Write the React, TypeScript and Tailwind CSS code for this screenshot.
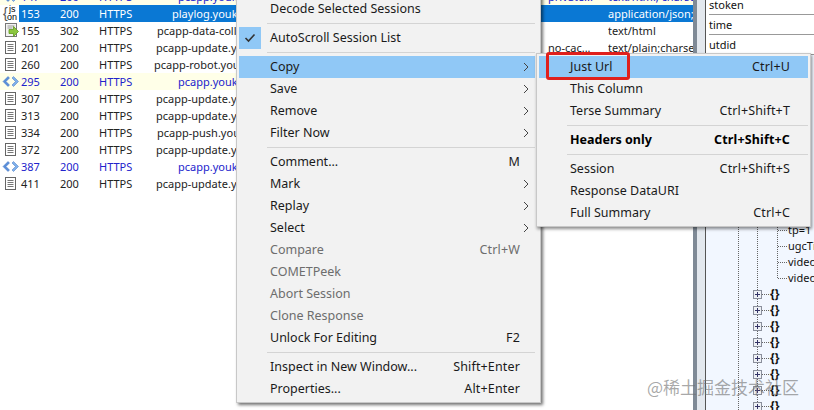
import React from "react";

const DocIcon = () => (
  <svg width="16" height="16" viewBox="0 0 16 16" className="shrink-0">
    <rect x="2.5" y="1.5" width="10" height="12" fill="#fff" stroke="#666" />
    <path d="M4.5 4.5h6M4.5 6.5h6M4.5 8.5h6M4.5 10.5h6" stroke="#777" strokeWidth="1" />
  </svg>
);
const CodeIcon = () => (
  <svg width="19" height="16" viewBox="0 0 19 16" className="shrink-0">
    <path d="M8 2.5L3 7.5l5 5 1.5-1.5L6 7.5 9.5 4z" fill="#5b8fd9" stroke="#3f74c4" strokeWidth=".5" />
    <path d="M13.5 2.5l5 5-5 5-1.5-1.5 3.5-3.5L12 4z" fill="#7fb0ea" stroke="#3f74c4" strokeWidth=".5" />
  </svg>
);
const RedirectIcon = () => (
  <svg width="20" height="16" viewBox="0 0 20 16" className="shrink-0">
    <rect x="6.5" y="0.5" width="11" height="13" fill="#f2f2f2" stroke="#777" />
    <path d="M8.5 3h7M8.5 5h5" stroke="#999" />
    <path d="M10 6.5h4.5v-3l5 5-5 5v-3H10z" fill="#8cc63f" stroke="#5f9a1a" strokeWidth=".8" />
  </svg>
);
const JsonIcon = () => (
  <div className="w-[19px] h-[17px] shrink-0 relative font-['Liberation_Sans',sans-serif] text-black">
    <span className="absolute left-[9px] top-[0px] text-[9px] leading-[8px]">js</span>
    <span className="absolute left-[7px] top-[8px] text-[9px] leading-[8px]">on</span>
    <span className="absolute left-[3px] top-[1px] text-[14px] leading-[14px] text-[#555]">{"{"}</span>
  </div>
);

type Row = {
  icon: React.ReactNode;
  id: string;
  status: string;
  host: string;
  pad: string;
  cache?: string;
  type?: string;
  blue?: boolean;
  yellow?: boolean;
  sel?: boolean;
};

const rows: Row[] = [
  { icon: <CodeIcon />, id: "147", status: "200", host: "pcapp.youku.com", pad: "pl-[40px]", cache: "private...", type: "text/html; charset", blue: true, yellow: true },
  { icon: <JsonIcon />, id: "153", status: "200", host: "playlog.youku.com", pad: "pl-[34px]", type: "application/json;charset", sel: true },
  { icon: <RedirectIcon />, id: "155", status: "302", host: "pcapp-data-collect.youku.com", pad: "pl-[19px]", type: "text/html" },
  { icon: <DocIcon />, id: "201", status: "200", host: "pcapp-update.youku.com", pad: "pl-[18px]", cache: "no-cac...", type: "text/plain;charset=utf" },
  { icon: <DocIcon />, id: "260", status: "200", host: "pcapp-robot.youku.com", pad: "pl-[16px]" },
  { icon: <CodeIcon />, id: "295", status: "200", host: "pcapp.youku.com", pad: "pl-[40px]", blue: true, yellow: true },
  { icon: <DocIcon />, id: "307", status: "200", host: "pcapp-update.youku.com", pad: "pl-[18px]" },
  { icon: <DocIcon />, id: "313", status: "200", host: "pcapp-update.youku.com", pad: "pl-[18px]" },
  { icon: <DocIcon />, id: "334", status: "200", host: "pcapp-push.youku.com", pad: "pl-[19px]" },
  { icon: <DocIcon />, id: "372", status: "200", host: "pcapp-update.youku.com", pad: "pl-[18px]" },
  { icon: <CodeIcon />, id: "387", status: "200", host: "pcapp.youku.com", pad: "pl-[40px]", blue: true },
  { icon: <DocIcon />, id: "411", status: "200", host: "pcapp-update.youku.com", pad: "pl-[18px]" },
];

function SessionRow({ r }: { r: Row }) {
  return (
    <div
      className={`flex items-center h-[17px] text-[11px] whitespace-nowrap ${
        r.yellow ? "bg-[#ffffe8]" : "bg-white"
      } ${r.blue ? "text-[#2222cc]" : "text-[#222]"}`}
    >
      <div className="w-[19px] shrink-0 flex justify-end">{r.icon}</div>
      <div className={`flex flex-1 items-center h-full pt-[2px] ${r.sel ? "bg-[#0a78d4] text-white" : ""}`}>
        <div className="w-[41px] pl-[2px] shrink-0">{r.id}</div>
        <div className="w-[39px] shrink-0">{r.status}</div>
        <div className="w-[39px] shrink-0">HTTPS</div>
        <div className={`w-[230px] shrink-0 overflow-hidden ${r.pad}`}>{r.host}</div>
        <div className="w-[180px] shrink-0" />
        <div className="w-[60px] shrink-0">{r.cache}</div>
        <div className="w-[85px] shrink-0 overflow-hidden">{r.type}</div>
      </div>
    </div>
  );
}

type Item =
  | { sep: true }
  | { label: string; key?: string; arrow?: boolean; hi?: boolean; off?: boolean; bold?: boolean; check?: boolean; sep?: false };

const mainMenu: Item[] = [
  { label: "Decode Selected Sessions" },
  { sep: true },
  { label: "AutoScroll Session List", check: true },
  { sep: true },
  { label: "Copy", arrow: true, hi: true },
  { label: "Save", arrow: true },
  { label: "Remove", arrow: true },
  { label: "Filter Now", arrow: true },
  { sep: true },
  { label: "Comment...", key: "M" },
  { label: "Mark", arrow: true },
  { label: "Replay", arrow: true },
  { label: "Select", arrow: true },
  { label: "Compare", key: "Ctrl+W", off: true },
  { label: "COMETPeek", off: true },
  { label: "Abort Session", off: true },
  { label: "Clone Response", off: true },
  { label: "Unlock For Editing", key: "F2" },
  { sep: true },
  { label: "Inspect in New Window...", key: "Shift+Enter" },
  { label: "Properties...", key: "Alt+Enter" },
];

const subMenu: Item[] = [
  { label: "Just Url", key: "Ctrl+U", hi: true },
  { label: "This Column" },
  { label: "Terse Summary", key: "Ctrl+Shift+T" },
  { sep: true },
  { label: "Headers only", key: "Ctrl+Shift+C", bold: true },
  { sep: true },
  { label: "Session", key: "Ctrl+Shift+S" },
  { label: "Response DataURI" },
  { label: "Full Summary", key: "Ctrl+C" },
];

function MenuList({ items, keyPad }: { items: Item[]; keyPad: string }) {
  return (
    <>
      {items.map((it, i) =>
        it.sep ? (
          <div key={i} className="h-[7px] flex items-center pl-[28px]">
            <div className="h-px w-full bg-[#d4d4d4]" />
          </div>
        ) : (
          <div
            key={i}
            className={`relative h-[22px] flex items-center pl-[31px] ${keyPad} whitespace-nowrap ${
              it.hi ? "bg-[#90c8f6]" : ""
            } ${it.off ? "text-[#6d6d6d]" : "text-[#1a1a1a]"} ${it.bold ? "font-bold text-black" : ""}`}
          >
            {it.check && (
              <div className="absolute left-0 top-0 w-[22px] h-[22px] bg-[#90c8f6] flex items-center justify-center">
                <svg width="12" height="10" viewBox="0 0 12 10">
                  <path d="M1.5 5l3 3 6-6.5" fill="none" stroke="#333" strokeWidth="1.6" />
                </svg>
              </div>
            )}
            <span className="flex-1">{it.label}</span>
            {it.key && <span className="tracking-[0.15px]">{it.key}</span>}
            {it.arrow && (
              <svg width="6" height="10" viewBox="0 0 6 10" className="absolute right-[6px] top-[6px]">
                <path d="M1 1l4 4-4 4" fill="none" stroke="#444" strokeWidth="1" />
              </svg>
            )}
          </div>
        )
      )}
    </>
  );
}

const TreeLeaf = ({ t }: { t: string }) => (
  <div className="h-[16px] flex items-center pl-[72px] whitespace-nowrap">
    <div className="w-[9px] shrink-0 border-t border-dotted border-[#666] mr-px" />
    <span>{t}</span>
  </div>
);
const TreeObj = () => (
  <div className="h-[16px] flex items-center pl-[47px]">
    <div className="relative w-[9px] h-[9px] border border-[#8a8f9c] bg-[#eef1f6] shrink-0">
      <div className="absolute left-[1px] top-[3px] w-[5px] h-px bg-[#333366]" />
      <div className="absolute left-[3px] top-[1px] w-px h-[5px] bg-[#333366]" />
    </div>
    <div className="w-[7px] shrink-0 border-t border-dotted border-[#666]" />
    <span className="ml-[1px] font-bold text-[12px]">{"{}"}</span>
  </div>
);

export default function App() {
  return (
    <div className="relative w-[814px] h-[410px] overflow-hidden bg-white flex font-['Noto_Sans','Liberation_Sans',sans-serif] text-[11px]">
      <div className="w-[693px] shrink-0 -mt-[12px]">
        {rows.map((r) => (
          <SessionRow key={r.id} r={r} />
        ))}
      </div>
      <div className="w-[4px] shrink-0 bg-[#7f8a96]" />
      <div className="w-[8px] shrink-0 bg-[#e3e8ee]" />
      <div className="flex-1 min-w-0 border-l border-[#555] flex flex-col overflow-hidden">
        <div className="bg-white text-[#111] pl-[3px]">
          <div className="h-[15px] border-b border-[#999] leading-[10px]">stoken</div>
          <div className="h-[20px] border-b border-[#999] leading-[20px]">time</div>
          <div className="h-[20px] border-b border-[#999] leading-[20px]">utdid</div>
        </div>
        <div className="relative flex-1 bg-[#f2f7ff] text-[#111] pt-[167px]">
          <div className="absolute left-[32px] top-0 bottom-0 border-l border-dotted border-[#666]" />
          <div className="absolute left-[51px] top-0 bottom-0 border-l border-dotted border-[#666]" />
          <div className="absolute left-[71px] top-0 h-[223px] border-l border-dotted border-[#666]" />
          <TreeLeaf t="tp=1" />
          <TreeLeaf t="ugcTitle" />
          <TreeLeaf t="videoId" />
          <TreeLeaf t="videoType" />
          {Array.from({ length: 8 }).map((_, i) => (
            <TreeObj key={i} />
          ))}
        </div>
      </div>

      <div className="absolute left-[236px] top-[-5px] w-[305px] h-[408px] bg-[#f2f2f2] border border-[#c8c8c8] p-[2px] pr-[5px] text-[12.5px] shadow-[2px_2px_3px_rgba(0,0,0,0.55)]">
        <MenuList items={mainMenu} keyPad="pr-[15px]" />
      </div>

      <div className="absolute left-[536px] top-[53px] w-[275px] h-[174px] bg-[#f2f2f2] border border-[#c8c8c8] p-[2px] text-[12.5px] shadow-[1px_2px_3px_rgba(0,0,0,0.45)]">
        <MenuList items={subMenu} keyPad="pr-[18px]" />
      </div>

      <div className="absolute left-[546px] top-[52px] w-[84px] h-[28px] border-[3px] border-[#e0201c] rounded-[3px]" />

      <div className="absolute left-[647px] top-[375px] text-[17px] leading-[24px] whitespace-nowrap text-[rgba(110,110,110,0.6)] font-['Noto_Sans_CJK_SC',sans-serif]">
        @稀土掘金技术社区
      </div>
    </div>
  );
}
